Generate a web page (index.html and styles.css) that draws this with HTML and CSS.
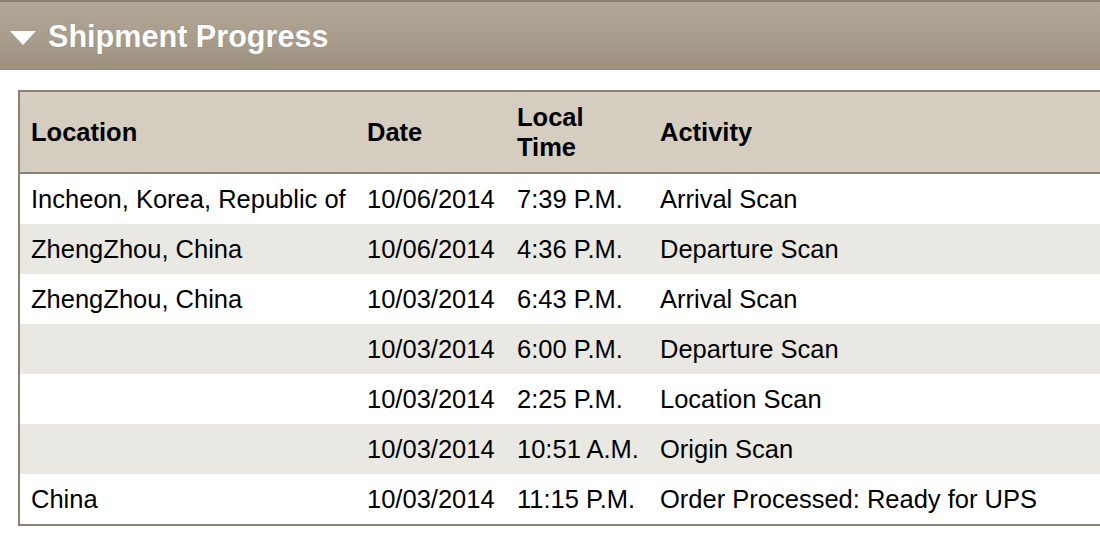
FILE: index.html
```html
<!DOCTYPE html>
<html lang="en">
<head>
<meta charset="utf-8">
<title>Shipment Progress</title>
<link rel="stylesheet" href="styles.css">
</head>
<body>
<div class="panel">
  <div class="panel-head">
    <span class="tri"></span>
    <h2 class="panel-title">Shipment Progress</h2>
  </div>
  <div class="panel-body">
    <table class="progress">
      <colgroup>
        <col class="c-loc">
        <col class="c-date">
        <col class="c-time">
        <col class="c-act">
      </colgroup>
      <thead>
        <tr>
          <th>Location</th>
          <th>Date</th>
          <th>Local Time</th>
          <th>Activity</th>
        </tr>
      </thead>
      <tbody>
        <tr><td>Incheon, Korea, Republic of</td><td>10/06/2014</td><td>7:39 P.M.</td><td>Arrival Scan</td></tr>
        <tr class="alt"><td>ZhengZhou, China</td><td>10/06/2014</td><td>4:36 P.M.</td><td>Departure Scan</td></tr>
        <tr><td>ZhengZhou, China</td><td>10/03/2014</td><td>6:43 P.M.</td><td>Arrival Scan</td></tr>
        <tr class="alt"><td></td><td>10/03/2014</td><td>6:00 P.M.</td><td>Departure Scan</td></tr>
        <tr><td></td><td>10/03/2014</td><td>2:25 P.M.</td><td>Location Scan</td></tr>
        <tr class="alt"><td></td><td>10/03/2014</td><td>10:51 A.M.</td><td>Origin Scan</td></tr>
        <tr><td>China</td><td>10/03/2014</td><td>11:15 P.M.</td><td>Order Processed: Ready for UPS</td></tr>
      </tbody>
    </table>
  </div>
</div>
</body>
</html>
```
FILE: styles.css
```css
html, body {
  margin: 0;
  padding: 0;
  background: #ffffff;
  overflow: hidden;
}

body {
  font-family: "Liberation Sans", Arial, Helvetica, sans-serif;
  color: #000;
}

.panel {
  width: 1100px;
}

.panel-head {
  display: flex;
  align-items: center;
  box-sizing: border-box;
  height: 70px;
  border-top: 2px solid #8a7e6e;
  background: linear-gradient(to bottom, #b2a798 0%, #a89c8c 55%, #9b8f7e 100%);
  padding-left: 10px;
}

.tri {
  width: 0;
  height: 0;
  border-left: 13px solid transparent;
  border-right: 13px solid transparent;
  border-top: 14px solid #ffffff;
  margin-right: 12px;
  margin-top: 3px;
}

.panel-title {
  margin: 0;
  font-size: 30.6px;
  font-weight: bold;
  color: #ffffff;
  line-height: 1;
  text-shadow: 0 0 1px rgba(90, 80, 65, 0.35);
}

.panel-body {
  padding: 20px 0 0 18px;
  overflow: hidden;
}

.progress {
  width: 1120px;
  table-layout: fixed;
  border-collapse: separate;
  border-spacing: 0;
  border-top: 2px solid #8c8171;
  border-left: 2px solid #8c8171;
  border-bottom: 2px solid #8c8171;
  font-size: 25.5px;
}

.c-loc { width: 336px; }
.c-date { width: 150px; }
.c-time { width: 143px; }

.progress th {
  height: 80px;
  background: #d5cdc0;
  border-bottom: 2px solid #8c8171;
  text-align: left;
  font-weight: bold;
  line-height: 30px;
  padding: 0 11px;
  vertical-align: middle;
}

.progress td {
  height: 50px;
  padding: 0 8px 0 11px;
  white-space: nowrap;
  vertical-align: middle;
  line-height: 30px;
}

.progress tr.alt td {
  background: #e9e8e3;
}
```
